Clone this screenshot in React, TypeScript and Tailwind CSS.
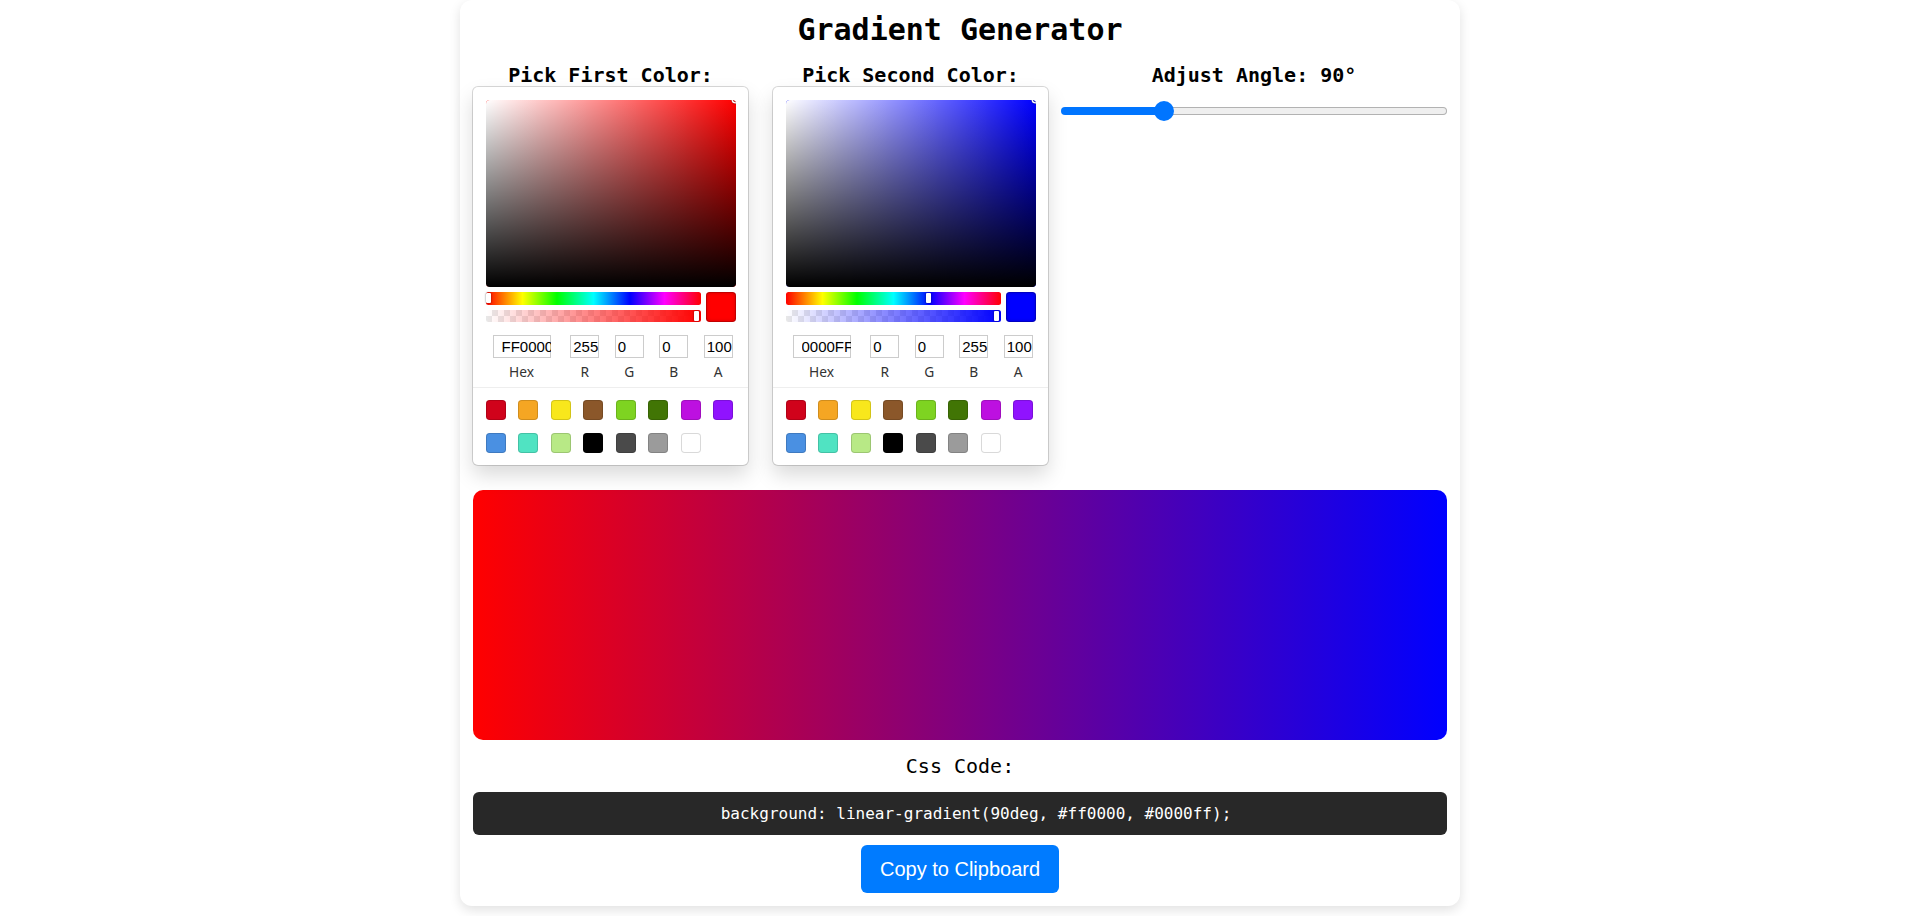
import React from 'react';

const PRESETS = [
  'bg-[#D0021B]',
  'bg-[#F5A623]',
  'bg-[#F8E71C]',
  'bg-[#8B572A]',
  'bg-[#7ED321]',
  'bg-[#417505]',
  'bg-[#BD10E0]',
  'bg-[#9013FE]',
  'bg-[#4A90E2]',
  'bg-[#50E3C2]',
  'bg-[#B8E986]',
  'bg-[#000000]',
  'bg-[#4A4A4A]',
  'bg-[#9B9B9B]',
  'bg-[#FFFFFF]',
];

type PickerProps = {
  hex: string;
  rgb: [number, number, number];
  hue: number;
  hueBg: string;
  alphaBg: string;
};

function SketchPicker({ hex, rgb, hue, hueBg, alphaBg }: PickerProps) {
  const fields = [
    { label: 'R', value: rgb[0] },
    { label: 'G', value: rgb[1] },
    { label: 'B', value: rgb[2] },
    { label: 'A', value: 100 },
  ];

  return (
    <div className="w-[275px] rounded-[5px] bg-white px-[12.5px] pt-[12.5px] shadow-[0_0_0_1px_rgba(0,0,0,0.15),0_10px_20px_rgba(0,0,0,0.15)]">
      {/* Saturation */}
      <div className={`relative h-[187.5px] w-full overflow-hidden rounded-[3.75px] ${hueBg}`}>
        <div className="h-full w-full bg-[linear-gradient(to_right,#fff,rgba(255,255,255,0))]">
          <div className="h-full w-full bg-[linear-gradient(to_top,#000,rgba(0,0,0,0))]" />
        </div>
        <div className="absolute right-[-2.5px] top-[-2.5px] h-[5px] w-[5px] rounded-full shadow-[0_0_0_1.5px_#fff,inset_0_0_1px_1px_rgba(0,0,0,0.3),0_0_1px_2px_rgba(0,0,0,0.4)]" />
      </div>

      {/* Controls */}
      <div className="flex">
        <div className="flex-1 py-[5px]">
          <div className="relative h-[12.5px] rounded-[2.5px] bg-[linear-gradient(to_right,#f00_0%,#ff0_17%,#0f0_33%,#0ff_50%,#00f_67%,#f0f_83%,#f00_100%)]">
            <div
              className="absolute top-[1.25px] h-[10px] w-[5px] rounded-[1px] bg-white shadow-[0_0_2px_rgba(0,0,0,0.6)]"
              style={{ left: `calc(${(hue / 360) * 100}% - ${hue === 0 ? 0 : 2.5}px)` }}
            />
          </div>
          <div className="relative mt-[5px] h-[12.5px] overflow-hidden rounded-[2.5px] bg-[repeating-conic-gradient(#e8e8e8_0_25%,#fff_0_50%)] bg-[length:12px_12px]">
            <div className={`h-full w-full ${alphaBg}`} />
            <div className="absolute right-[2px] top-[1.25px] h-[10px] w-[5px] rounded-[1px] bg-white shadow-[0_0_2px_rgba(0,0,0,0.6)]" />
          </div>
        </div>
        <div className={`ml-[5px] mt-[5px] h-[30px] w-[30px] rounded-[3.75px] shadow-[inset_0_0_0_1px_rgba(0,0,0,0.15),inset_0_0_4px_rgba(0,0,0,0.25)] ${hueBg}`} />
      </div>

      {/* Fields */}
      <div className="flex pt-[8px] font-['Noto_Sans',sans-serif]">
        <div className="flex w-[72px] flex-col items-center">
          <input
            readOnly
            value={hex}
            className="h-[23px] w-[58px] pl-[9px] font-['Liberation_Sans',Arial,sans-serif] text-[15px] text-black shadow-[inset_0_0_0_1px_#ccc] outline-none"
          />
          <span className="block pb-[5px] pt-[3.75px] text-center text-[13.75px] leading-[20px] text-[#333]">Hex</span>
        </div>
        {fields.map((f) => (
          <div key={f.label} className="flex flex-1 flex-col items-center pl-[10px]">
            <input
              readOnly
              value={String(f.value)}
              className="h-[23px] w-[29px] pl-[3px] font-['Liberation_Sans',Arial,sans-serif] text-[15px] text-black shadow-[inset_0_0_0_1px_#ccc] outline-none"
            />
            <span className="block pb-[5px] pt-[3.75px] text-center text-[13.75px] leading-[20px] text-[#333]">{f.label}</span>
          </div>
        ))}
      </div>

      {/* Preset colours */}
      <div className="mx-[-12.5px] flex flex-wrap border-t border-[#eee] pl-[12.5px] pt-[12.5px]">
        {PRESETS.map((c) => (
          <div
            key={c}
            className={`mb-[12.5px] mr-[12.5px] h-[20px] w-[20px] rounded-[3.75px] shadow-[inset_0_0_0_1px_rgba(0,0,0,0.15)] ${c}`}
          />
        ))}
      </div>
    </div>
  );
}

export default function App() {
  const angle = 90;

  return (
    <div className="min-h-screen bg-white font-['DejaVu_Sans_Mono',monospace] text-black">
      <div className="mx-auto w-[1000px] rounded-[12px] bg-white px-[13px] pb-[13px] pt-[12px] shadow-[0_4px_12px_rgba(0,0,0,0.12)]">
        <h1 className="text-center text-[30px] font-bold leading-[36px]">Gradient Generator</h1>

        <div className="mt-[15px] flex">
          <div className="flex w-[275px] flex-col items-center">
            <h3 className="text-[20px] font-bold leading-[24px]">Pick First Color:</h3>
            <SketchPicker
              hex="FF0000"
              rgb={[255, 0, 0]}
              hue={0}
              hueBg="bg-[#ff0000]"
              alphaBg="bg-[linear-gradient(to_right,rgba(255,0,0,0),#ff0000)]"
            />
          </div>

          <div className="ml-[25px] flex w-[275px] flex-col items-center">
            <h3 className="text-[20px] font-bold leading-[24px]">Pick Second Color:</h3>
            <SketchPicker
              hex="0000FF"
              rgb={[0, 0, 255]}
              hue={240}
              hueBg="bg-[#0000ff]"
              alphaBg="bg-[linear-gradient(to_right,rgba(0,0,255,0),#0000ff)]"
            />
          </div>

          <div className="ml-[13px] flex flex-1 flex-col">
            <h3 className="text-center text-[20px] font-bold leading-[24px]">Adjust Angle: {angle}°</h3>
            <div className="relative mt-[14px] flex h-[20px] items-center">
              <div className="h-[8px] w-[103px] rounded-l-full bg-[#0075ff]" />
              <div className="h-[8px] flex-1 rounded-r-full border border-l-0 border-[#b2b2b2] bg-[#efefef]" />
              <div className="absolute left-[93px] top-0 h-[20px] w-[20px] rounded-full bg-[#0075ff]" />
            </div>
          </div>
        </div>

        <div className="mt-[25px] h-[250px] rounded-[10px] bg-[linear-gradient(90deg,#ff0000,#0000ff)]" />

        <p className="mt-[14px] text-center text-[20px] leading-[24px]">Css Code:</p>

        <div className="mt-[14px] flex h-[43px] items-center justify-center rounded-[6px] bg-[#282828] pl-[32px] text-[16px] text-white">
          background: linear-gradient({angle}deg, #ff0000, #0000ff);
        </div>

        <div className="mt-[10px] flex justify-center">
          <button className="h-[48px] rounded-[6px] bg-[#007bff] px-[19px] font-['Liberation_Sans',Arial,sans-serif] text-[20px] text-white">
            Copy to Clipboard
          </button>
        </div>
      </div>
    </div>
  );
}
